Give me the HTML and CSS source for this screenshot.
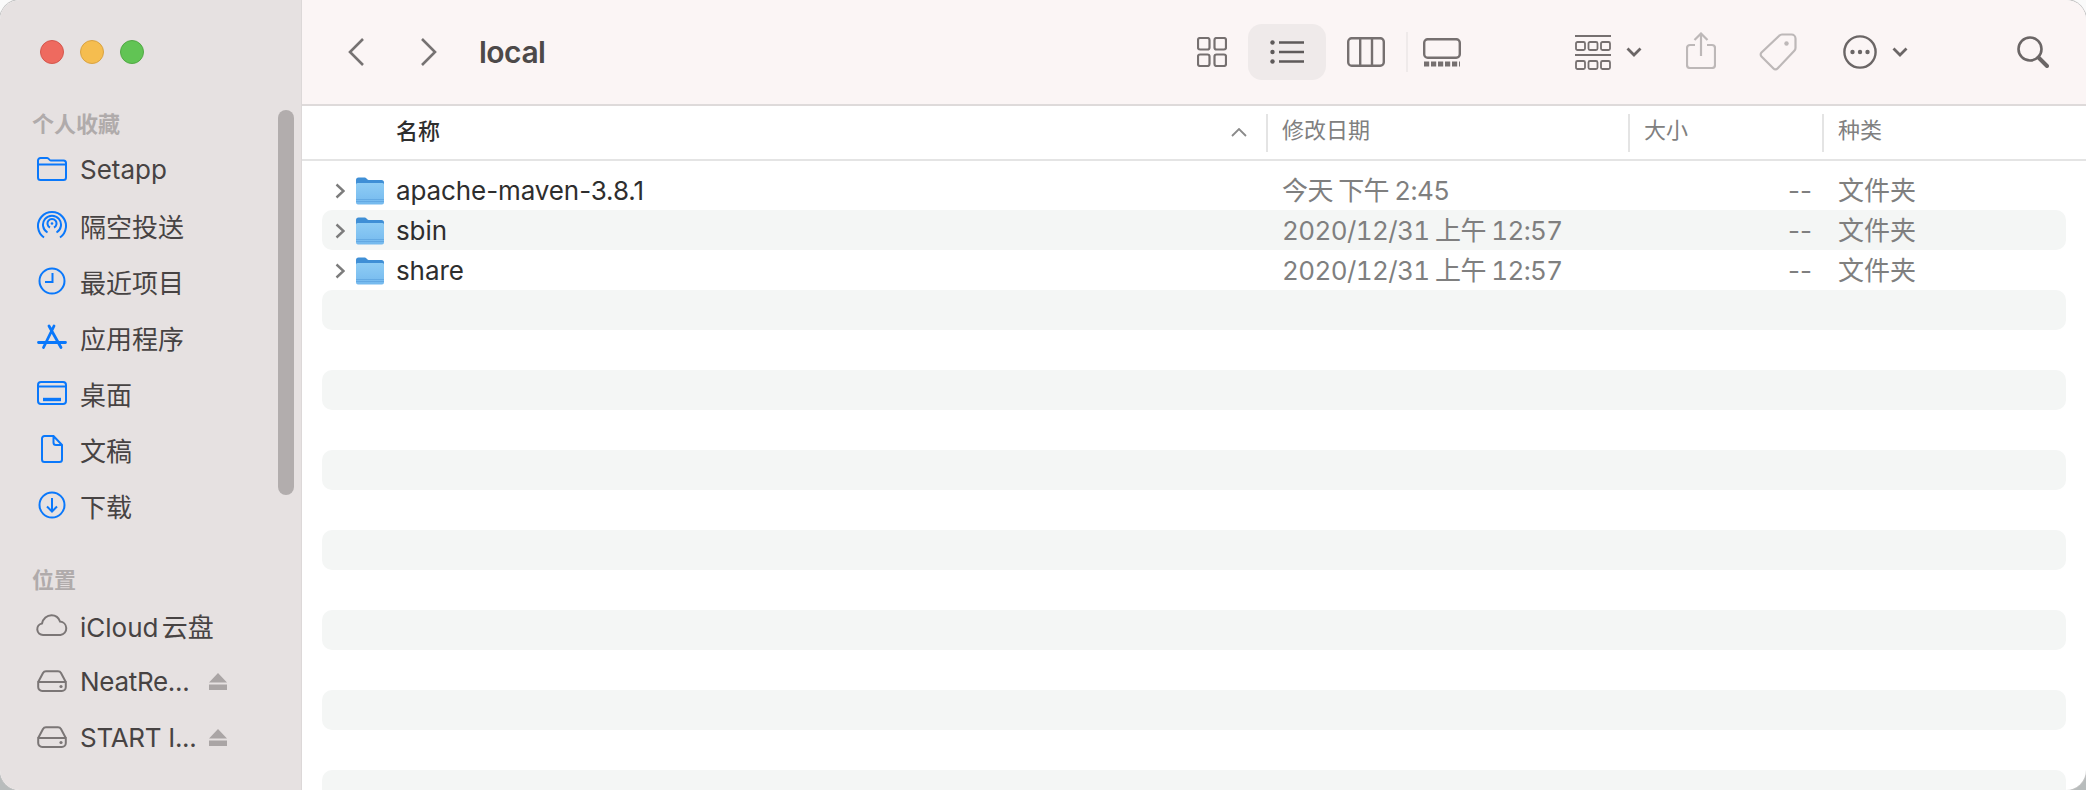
FILE: index.html
```html
<!DOCTYPE html>
<html lang="zh-CN">
<head>
  <meta charset="UTF-8" />
  <title>local</title>
  <link rel="stylesheet" href="styles.css">
</head>
<body>
<svg class="defs" width="0" height="0">
  <defs>
    <linearGradient id="folderFront" x1="0" y1="0" x2="0" y2="1">
      <stop offset="0" stop-color="#8fcdf5"/>
      <stop offset="1" stop-color="#74b9ee"/>
    </linearGradient>
    <symbol id="folder" viewBox="0 0 28 28">
      <path d="M0 3a2.500 2.500 0 0 1 2.500-2.500h6.500c1.500 0 2 2.500 3.500 2.500h13a2.500 2.500 0 0 1 2.500 2.500v6h-28z" fill="#3f8fd6"/>
      <path d="M0 7.500a1.500 1.500 0 0 1 1.500-1.500h25a1.500 1.500 0 0 1 1.500 1.500v18a2 2 0 0 1-2 2h-24a2 2 0 0 1-2-2z" fill="url(#folderFront)"/>
      <path d="M0 22.500h28M0 24.500h28" stroke="#5ea5e0" stroke-width=".8" fill="none"/>
    </symbol>
    <symbol id="disclosure" viewBox="0 0 10 16">
      <path d="M1.500 1.500 8.500 8l-7 6.500" fill="none" stroke="#7c7c7c" stroke-width="2.400"/>
    </symbol>
    <symbol id="disk" viewBox="0 0 30 22">
      <path d="M1.200 12 6 3a3.500 3.500 0 0 1 3-1.800h12a3.500 3.500 0 0 1 3 1.800l4.800 9M1.200 12v5a4 4 0 0 0 4 4h19.600a4 4 0 0 0 4-4v-5zM1.200 12h27.600" fill="none" stroke="#7b7676" stroke-width="2"/>
      <circle cx="24" cy="16.500" r="1.600" fill="#7b7676"/>
    </symbol>
    <symbol id="eject" viewBox="0 0 18 17">
      <path d="M9 0 18 9.500H0zM0 11.500h18V17H0z" fill="#aaa5a5"/>
    </symbol>
  </defs>
</svg>

<div class="window">
  <aside class="sidebar">
    <div class="lights">
      <span class="light red"></span>
      <span class="light yellow"></span>
      <span class="light green"></span>
    </div>

    <h4 class="side-title">个人收藏</h4>
    <ul class="side-list">
      <li>
        <svg class="side-icon" viewBox="0 0 30 24" fill="none" stroke="#0a78fb" stroke-width="2"><path d="M1 20V3.500A2.500 2.500 0 0 1 3.500 1h6.800c1.500 0 2 2.500 3.500 2.500h12.700A2.500 2.500 0 0 1 29 6v14.500a2.500 2.500 0 0 1-2.500 2.500h-23A2.500 2.500 0 0 1 1 20.500zM1 7.500h28"/></svg>
        <span>Setapp</span>
      </li>
      <li>
        <svg class="side-icon" viewBox="0 0 30 28" fill="none" stroke="#0a78fb" stroke-width="2"><path d="M7 26.500a14 14 0 1 1 16 0M10.500 21.500a9 9 0 1 1 9 0M13 16.500a4.500 4.500 0 1 1 4 0"/><circle cx="15" cy="12.500" r="1.300" fill="#0a78fb" stroke="none"/></svg>
        <span>隔空投送</span>
      </li>
      <li>
        <svg class="side-icon" viewBox="0 0 30 28" fill="none" stroke="#0a78fb" stroke-width="2"><circle cx="15" cy="14" r="12.500"/><path d="M15.500 6v9H8"/></svg>
        <span>最近项目</span>
      </li>
      <li>
        <svg class="side-icon" viewBox="0 0 30 26" fill="none" stroke="#0a78fb" stroke-width="2.800" stroke-linecap="round"><path d="M12 2 24 23.500M17 2 6.500 23.500M1.500 18.500h27"/></svg>
        <span>应用程序</span>
      </li>
      <li>
        <svg class="side-icon" viewBox="0 0 30 24" fill="none" stroke="#0a78fb" stroke-width="2"><rect x="1" y="1" width="28" height="22" rx="3"/><path d="M1 5.500h28"/><path d="M6 18.500h18" stroke-width="3.400"/></svg>
        <span>桌面</span>
      </li>
      <li>
        <svg class="side-icon" viewBox="0 0 30 28" fill="none" stroke="#0a78fb" stroke-width="2"><path d="M5 3.500A2.500 2.500 0 0 1 7.500 1h9L25 10v14.500a2.500 2.500 0 0 1-2.500 2.500h-15A2.500 2.500 0 0 1 5 24.500zM16.500 1v6.500a2.500 2.500 0 0 0 2.500 2.500h6"/></svg>
        <span>文稿</span>
      </li>
      <li>
        <svg class="side-icon" viewBox="0 0 30 28" fill="none" stroke="#0a78fb" stroke-width="2"><circle cx="15" cy="14" r="12.500"/><path d="M15 7v13M10 15.500l5 5 5-5"/></svg>
        <span>下载</span>
      </li>
    </ul>

    <h4 class="side-title places">位置</h4>
    <ul class="side-list">
      <li>
        <svg class="side-icon cloud" viewBox="0 0 32 22" fill="none" stroke="#7b7676" stroke-width="2"><path d="M7 21a5.800 5.800 0 0 1-1-11.500C7 4.500 11 1.200 15.500 1.200c4 0 7.300 2.600 8.500 6.300A6.800 6.800 0 0 1 24.500 21z"/></svg>
        <span class="tight">iCloud 云盘</span>
      </li>
      <li>
        <svg class="side-icon" viewBox="0 0 30 22"><use href="#disk"/></svg>
        <span class="disk-name">NeatRe...</span>
        <svg class="eject" viewBox="0 0 18 17"><use href="#eject"/></svg>
      </li>
      <li>
        <svg class="side-icon" viewBox="0 0 30 22"><use href="#disk"/></svg>
        <span class="disk-name">START I...</span>
        <svg class="eject" viewBox="0 0 18 17"><use href="#eject"/></svg>
      </li>
    </ul>
    <div class="side-scroll"></div>
  </aside>

  <main class="content">
    <div class="toolbar">
      <div class="nav-btns">
        <svg class="nav-icon" viewBox="0 0 16 28" fill="none" stroke="#767272" stroke-width="2.600"><path d="M15 1 2 14l13 13"/></svg>
        <svg class="nav-icon" viewBox="0 0 16 28" fill="none" stroke="#767272" stroke-width="2.600"><path d="M1 1l13 13L1 27"/></svg>
      </div>
      <div class="title">local</div>

      <div class="view-btns">
        <div class="view-btn grid-btn">
          <svg class="ic-grid" viewBox="0 0 30 30" fill="none" stroke="#767070" stroke-width="2.200"><rect x="1" y="1" width="11.500" height="11.500" rx="2"/><rect x="17.500" y="1" width="11.500" height="11.500" rx="2"/><rect x="1" y="17.500" width="11.500" height="11.500" rx="2"/><rect x="17.500" y="17.500" width="11.500" height="11.500" rx="2"/></svg>
        </div>
        <div class="view-btn active">
          <svg class="ic-list" viewBox="0 0 34 24" fill="none" stroke="#5e5a5a" stroke-width="2.600"><path d="M9 2.500h25M9 12h25M9 21.500h25"/><circle cx="2.500" cy="2.500" r="2.200" fill="#5e5a5a" stroke="none"/><circle cx="2.500" cy="12" r="2.200" fill="#5e5a5a" stroke="none"/><circle cx="2.500" cy="21.500" r="2.200" fill="#5e5a5a" stroke="none"/></svg>
        </div>
        <div class="view-btn cols-btn">
          <svg class="ic-cols" viewBox="0 0 38 30" fill="none" stroke="#767070" stroke-width="2.400"><rect x="1.200" y="1.200" width="35.600" height="27.600" rx="3.500"/><path d="M13.200 1v28M25 1v28"/></svg>
        </div>
        <span class="tool-sep"></span>
        <div class="view-btn gallery">
          <svg class="ic-gallery" viewBox="0 0 38 29" fill="none" stroke="#767070" stroke-width="2.400"><rect x="1.200" y="1.200" width="35.600" height="18.600" rx="3.500"/><path d="M1 26h36" stroke-width="5" stroke-dasharray="5.200 1.800"/></svg>
        </div>
      </div>

      <div class="tool-group">
        <svg class="ic-group" viewBox="0 0 36 35" fill="none" stroke="#767070" stroke-width="1.800"><path d="M0 1h36M0 20h36" stroke-width="2"/><rect x="1" y="7" width="9" height="8" rx="1.500"/><rect x="13.500" y="7" width="9" height="8" rx="1.500"/><rect x="26" y="7" width="9" height="8" rx="1.500"/><rect x="1" y="26" width="9" height="8" rx="1.500"/><rect x="13.500" y="26" width="9" height="8" rx="1.500"/><rect x="26" y="26" width="9" height="8" rx="1.500"/></svg>
        <svg class="ic-chev" viewBox="0 0 16 10" fill="none" stroke="#6b6666" stroke-width="2.800"><path d="M1.500 1.500 8 8l6.500-6.500"/></svg>
      </div>
      <svg class="ic-share" viewBox="0 0 30 37" fill="none" stroke="#bdb8b8" stroke-width="2.200"><path d="M9 13H4a3 3 0 0 0-3 3v17a3 3 0 0 0 3 3h22a3 3 0 0 0 3-3V16a3 3 0 0 0-3-3h-5M15 24V2M8.500 8 15 1.500 21.500 8"/></svg>
      <svg class="ic-tag" viewBox="0 0 38 38" fill="none" stroke="#bdb8b8" stroke-width="2.200"><path d="M23 1.500h9.500a4 4 0 0 1 4 4V15a4 4 0 0 1-1.200 2.800L18.500 35.500a2.800 2.800 0 0 1-4 0L2.500 23.500a2.800 2.800 0 0 1 0-4L20.200 2.700A4 4 0 0 1 23 1.500z"/><circle cx="27.500" cy="10.500" r="2.200" fill="#bdb8b8" stroke="none"/></svg>
      <div class="tool-group more">
        <svg class="ic-more" viewBox="0 0 34 34" fill="none" stroke="#6b6666" stroke-width="2.400"><circle cx="17" cy="17" r="15.600"/><circle cx="9.500" cy="17" r="2.200" fill="#6b6666" stroke="none"/><circle cx="17" cy="17" r="2.200" fill="#6b6666" stroke="none"/><circle cx="24.500" cy="17" r="2.200" fill="#6b6666" stroke="none"/></svg>
        <svg class="ic-chev" viewBox="0 0 16 10" fill="none" stroke="#6b6666" stroke-width="2.800"><path d="M1.500 1.500 8 8l6.500-6.500"/></svg>
      </div>
      <svg class="ic-search" viewBox="0 0 32 32" fill="none" stroke="#6b6666" stroke-width="2.600"><circle cx="13" cy="13" r="11.500"/><path d="M21.500 21.500 30 30" stroke-width="4" stroke-linecap="round"/></svg>
    </div>

    <div class="list-head">
      <div class="col-name">
        <span>名称</span>
        <svg class="sort" viewBox="0 0 16 9" fill="none" stroke="#8a8a8a" stroke-width="1.800"><path d="M1 8l7-7 7 7"/></svg>
      </div>
      <div class="col">修改日期</div>
      <div class="col">大小</div>
      <div class="col">种类</div>
    </div>

    <div class="rows">
      <div class="row">
        <div class="name"><svg class="disc" viewBox="0 0 10 16"><use href="#disclosure"/></svg><svg class="folder" viewBox="0 0 28 28"><use href="#folder"/></svg><span>apache-maven-3.8.1</span></div>
        <div class="cell date">今天 下午 2:45</div><div class="cell size">--</div><div class="cell">文件夹</div>
      </div>
      <div class="row">
        <div class="name"><svg class="disc" viewBox="0 0 10 16"><use href="#disclosure"/></svg><svg class="folder" viewBox="0 0 28 28"><use href="#folder"/></svg><span>sbin</span></div>
        <div class="cell date">2020/12/31 上午 12:57</div><div class="cell size">--</div><div class="cell">文件夹</div>
      </div>
      <div class="row">
        <div class="name"><svg class="disc" viewBox="0 0 10 16"><use href="#disclosure"/></svg><svg class="folder" viewBox="0 0 28 28"><use href="#folder"/></svg><span>share</span></div>
        <div class="cell date">2020/12/31 上午 12:57</div><div class="cell size">--</div><div class="cell">文件夹</div>
      </div>
      <div class="row"></div><div class="row"></div><div class="row"></div><div class="row"></div>
      <div class="row"></div><div class="row"></div><div class="row"></div><div class="row"></div>
      <div class="row"></div><div class="row"></div><div class="row"></div><div class="row"></div>
      <div class="row"></div>
    </div>
  </main>
</div>
</body>
</html>
```

FILE: styles.css
```css
html, body {
  margin: 0;
  height: 790px;
  overflow: hidden;
}
body {
  background: linear-gradient(#fafafa 0 50%, #b8bcbc 50%);
  font-family: Inter, "Noto Sans CJK SC", sans-serif;
}
.defs { position: absolute; }

.window {
  display: flex;
  height: 790px;
  width: 2086px;
  background: white;
  border-radius: 20px;
  box-shadow: 0 0 0 1px #c4c4c4;
}

/* sidebar */
.sidebar {
  position: relative;
  width: 302px;
  flex: none;
  box-sizing: border-box;
  background: #e6e1e1;
  border-right: 1px solid #dcd8d8;
  border-radius: 20px 0 0 20px;
  padding: 40px 0 0 0;
}
.lights {
  display: flex;
  gap: 16px;
  padding-left: 40px;
  height: 24px;
}
.light {
  width: 24px;
  height: 24px;
  box-sizing: border-box;
  border-radius: 50%;
  border: 1px solid;
}
.red { background: #ee6a5f; border-color: #d4574d; }
.yellow { background: #f5bd4f; border-color: #d9a343; }
.green { background: #61c454; border-color: #52a945; }

.side-title {
  margin: 0;
  padding-left: 32px;
  font-size: 22px;
  font-weight: 700;
  line-height: 28px;
  color: #b0abab;
}
.lights + .side-title { margin-top: 46px; }
.side-title.places { margin-top: 33px; }
.side-list {
  list-style: none;
  margin: 3px 0 0;
  padding: 0;
}
.side-list li {
  display: flex;
  align-items: center;
  height: 56px;
  font-size: 26px;
  color: #474343;
}
.side-icon {
  width: 30px;
  height: 28px;
  margin: 0 13px 0 37px;
  flex: none;
}
.side-icon.cloud { width: 32px; margin: 0 12px 0 36px; }
.tight { word-spacing: -4px; }
.disk-name { width: 129px; white-space: nowrap; letter-spacing: -0.3px; }
.eject { width: 18px; height: 17px; flex: none; }
.side-scroll {
  position: absolute;
  left: 278px;
  top: 110px;
  width: 16px;
  height: 385px;
  border-radius: 8px;
  background: #b2adad;
}

/* toolbar */
.content {
  flex: 1;
  min-width: 0;
  overflow: hidden;
  border-radius: 0 20px 20px 0;
}
.toolbar {
  display: flex;
  align-items: center;
  height: 104px;
  background: #fbf5f5;
  border-bottom: 2px solid #dedada;
  padding-left: 46px;
}
.nav-btns {
  display: flex;
  gap: 57px;
}
.nav-icon { width: 16px; height: 28px; display: block; }
.title {
  margin-left: 42px;
  width: 697px;
  font-size: 30px;
  font-weight: 600;
  color: #4d4949;
  letter-spacing: -0.5px;
}
.view-btns {
  display: flex;
  align-items: center;
  height: 56px;
}
.view-btn {
  display: flex;
  align-items: center;
  justify-content: center;
  width: 78px;
  height: 56px;
  border-radius: 14px;
}
.view-btn.grid-btn { width: 72px; }
.view-btn.cols-btn { width: 80px; }
.view-btn.active { background: #efeaea; }
.view-btn.gallery { width: 38px; margin-left: 15px; }
.ic-grid { width: 30px; height: 30px; }
.ic-list { width: 34px; height: 24px; }
.ic-cols { width: 38px; height: 30px; }
.ic-gallery { width: 38px; height: 29px; }
.tool-sep {
  width: 2px;
  height: 40px;
  background: #efeaea;
}
.tool-group {
  display: flex;
  align-items: center;
  gap: 15px;
  margin-left: 114px;
}
.ic-group { width: 36px; height: 35px; }
.ic-chev { width: 16px; height: 10px; }
.ic-share { width: 30px; height: 37px; margin: -4px 0 0 44px; flex: none; }
.ic-tag { width: 38px; height: 38px; margin-left: 43px; flex: none; }
.tool-group.more { margin-left: 46px; }
.ic-more { width: 34px; height: 34px; }
.ic-search { width: 32px; height: 32px; margin-left: 109px; flex: none; }

/* list */
.list-head {
  display: grid;
  grid-template-columns: 964px 362px 194px 1fr;
  height: 53px;
  border-bottom: 2px solid #e4e4e4;
  font-size: 22px;
  align-items: center;
}
.col-name {
  display: flex;
  align-items: center;
  justify-content: space-between;
  padding: 0 19px 0 94px;
  font-weight: 500;
  color: #2e2e2e;
}
.col-name span { margin-bottom: 8px; }
.sort { width: 16px; height: 9px; }
.col {
  height: 38px;
  line-height: 33px;
  border-left: 2px solid #e4e4e4;
  padding-left: 14px;
  color: #808080;
}
.rows { padding: 9px 20px 0; }
.row {
  display: grid;
  grid-template-columns: 944px 362px 194px 1fr;
  align-items: center;
  height: 40px;
  border-radius: 10px;
  font-size: 26px;
}
.row:nth-child(even) { background: #f4f6f5; }
.name {
  display: flex;
  align-items: center;
  color: #2e2e2e;
  letter-spacing: -0.1px;
}
.disc { width: 10px; height: 16px; margin-left: 13px; }
.folder { width: 28px; height: 28px; margin: 0 12px 0 11px; }
.cell {
  padding-left: 16px;
  color: #7f7f7f;
  line-height: 41px;
  align-self: start;
}
.cell.date {
  font-variant-numeric: tabular-nums;
  letter-spacing: -0.6px;
  word-spacing: -1px;
}
.cell.size {
  padding: 0 10px 0 0;
  text-align: right;
}
```
